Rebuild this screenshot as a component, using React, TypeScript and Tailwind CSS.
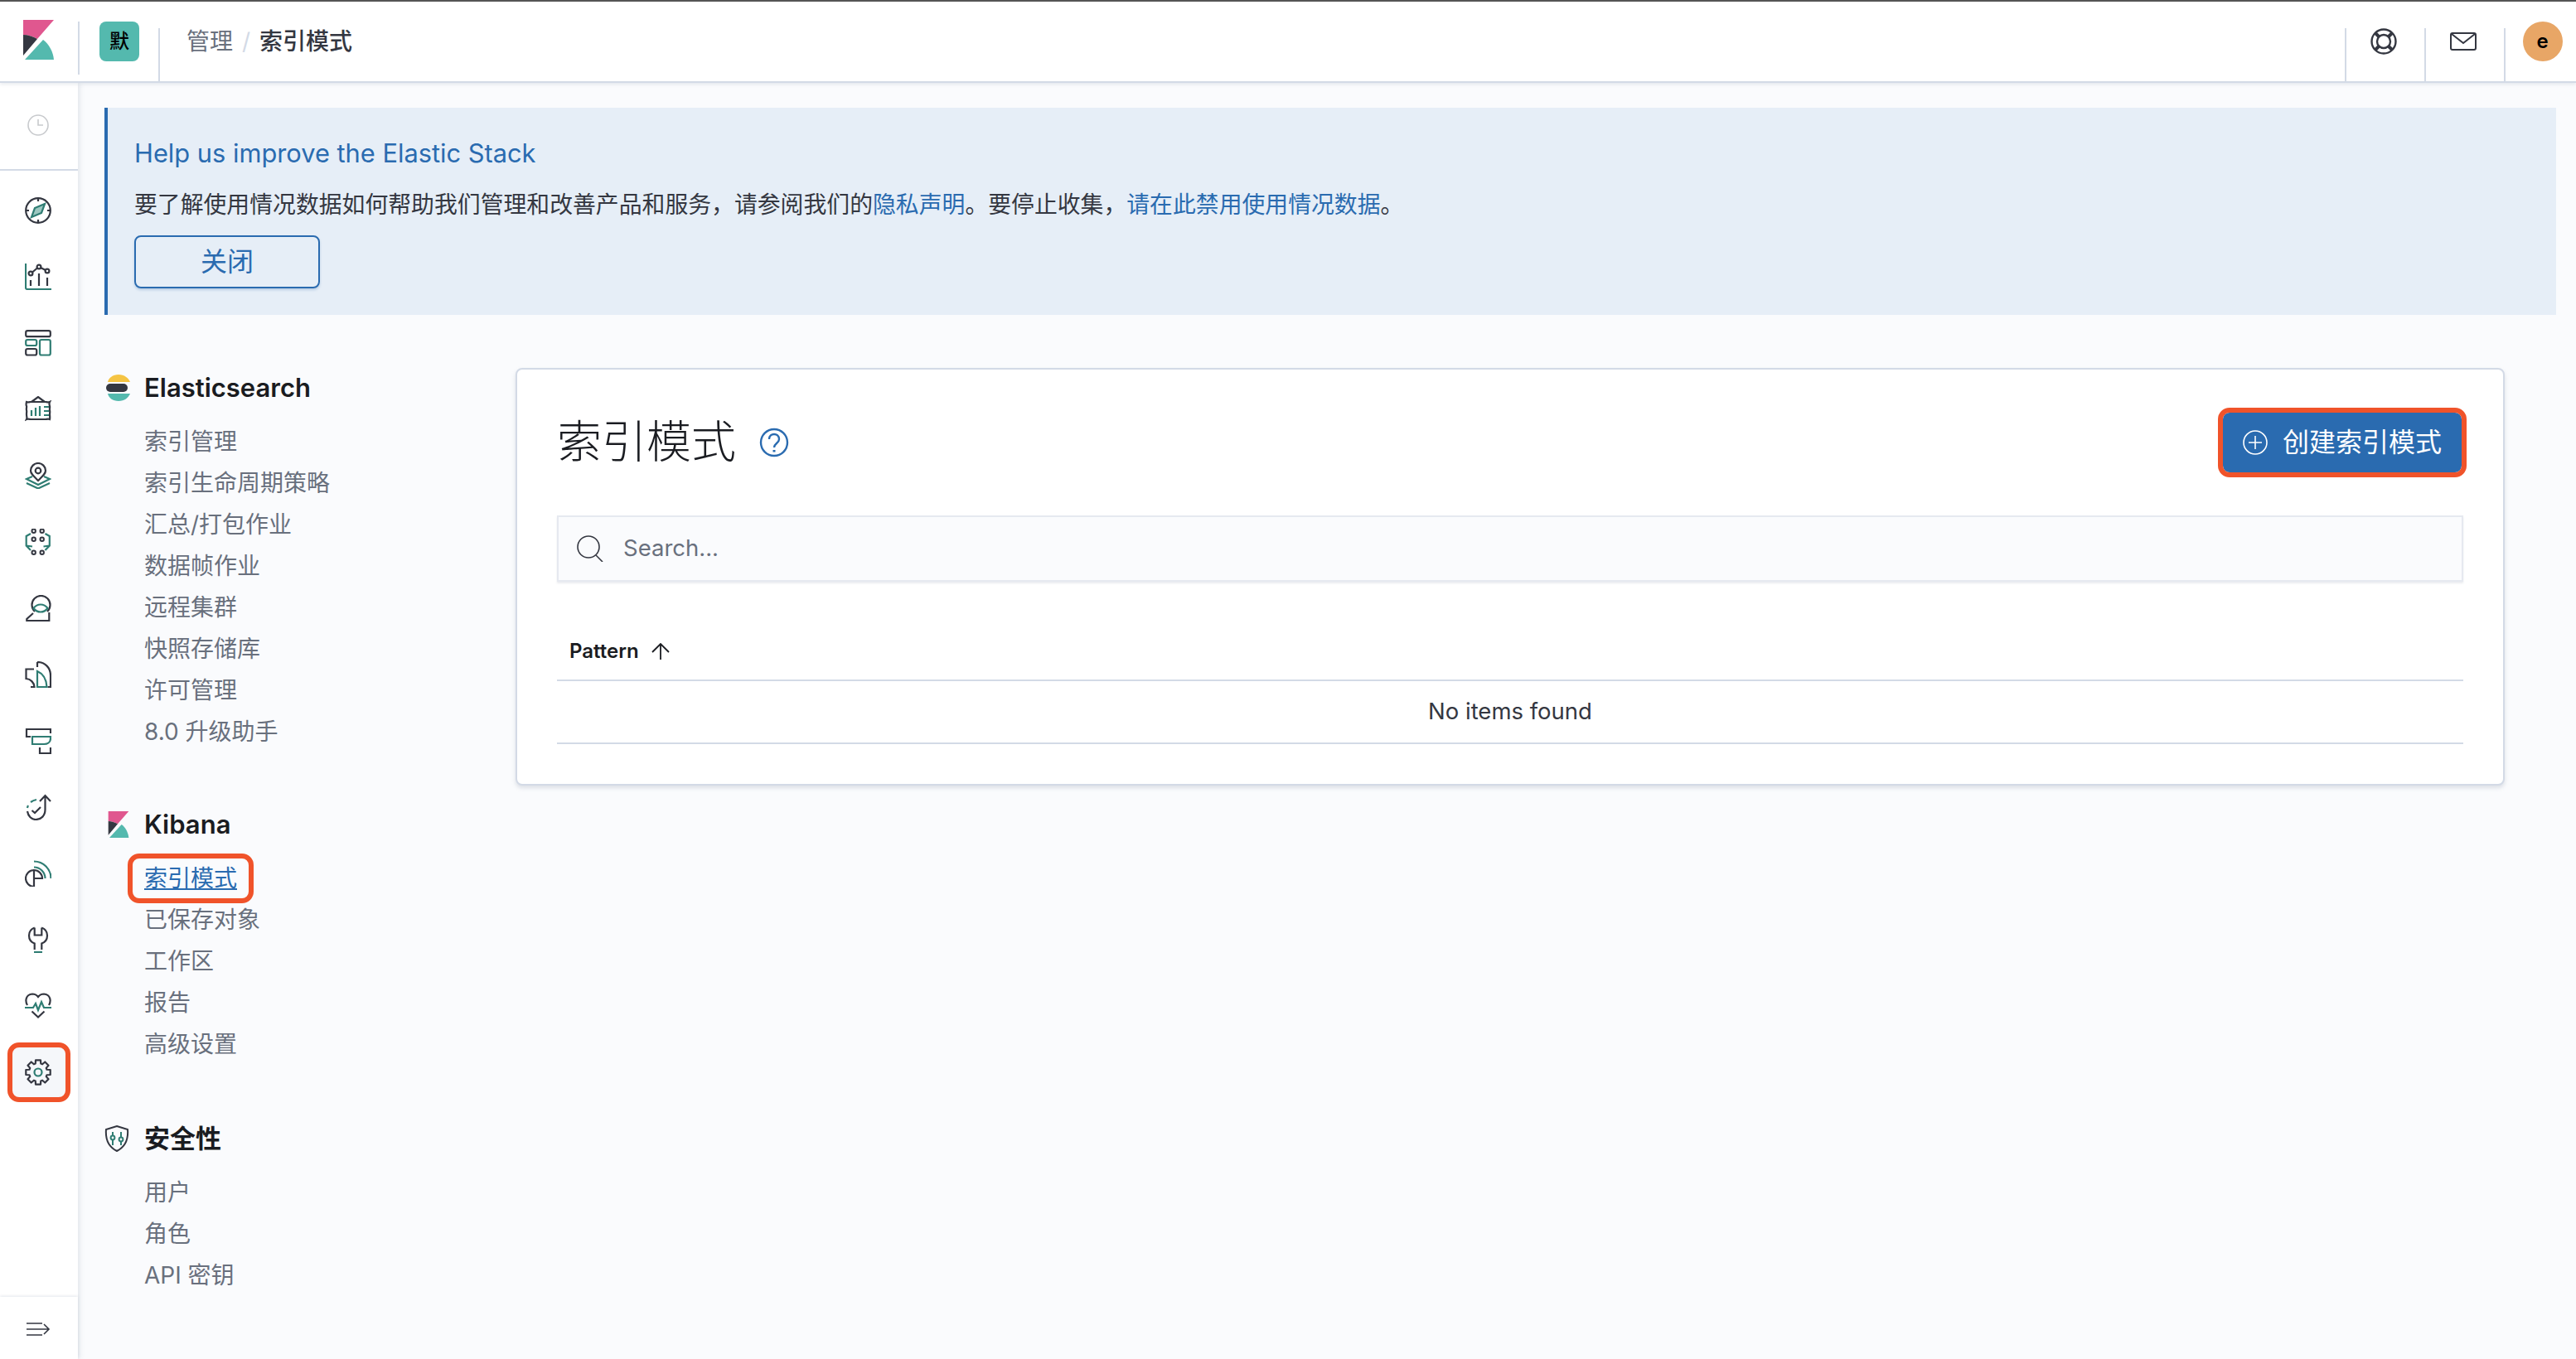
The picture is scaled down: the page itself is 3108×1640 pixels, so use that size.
import { ReactNode } from "react";

const DARK = "#343741";
const TEAL = "#2f7d73";

function Nav({ children }: { children: ReactNode }) {
  return (
    <svg viewBox="0 0 32 32" className="h-8 w-8" fill="none" stroke={DARK} strokeWidth={2.2}>
      {children}
    </svg>
  );
}

const gearPath = (() => {
  const pts: string[] = [];
  for (let i = 0; i < 8; i++) {
    const a = (i * Math.PI) / 4 - Math.PI / 2;
    const at = (r: number, d: number) =>
      `${(16 + r * Math.cos(a + d)).toFixed(2)} ${(16 + r * Math.sin(a + d)).toFixed(2)}`;
    pts.push(at(11, -0.3), at(15, -0.2), at(15, 0.2), at(11, 0.3));
  }
  return "M" + pts.join("L") + "Z";
})();

const navIcons: ReactNode[] = [
  <Nav>
    <circle cx="16" cy="16" r="14.8" />
    <path d="M16 1v4M16 27v4M1 16h4M27 16h4" />
    <path d="M24 8l-4 11-12 5 4-11z" stroke={TEAL} fill="#9cc7c0" />
  </Nav>,
  <Nav>
    <path d="M1 0v29a2 2 0 0 0 2 2h29" stroke={TEAL} />
    <path d="M9 10.5l6-5M19 5l6 3M7 20v7M17 12v15M27 17v10" />
    <circle cx="7" cy="12" r="2.4" />
    <circle cx="17" cy="4" r="2.4" />
    <circle cx="27" cy="9" r="2.4" />
  </Nav>,
  <Nav>
    <rect x="1.2" y="1.2" width="29.6" height="7" rx="2" />
    <rect x="1.2" y="12" width="13" height="7" rx="2" stroke={TEAL} />
    <rect x="1.2" y="23" width="13" height="7.5" rx="2" />
    <rect x="18" y="12" width="12.8" height="18.5" rx="2" stroke={TEAL} />
  </Nav>,
  <Nav>
    <path d="M8 7l8-6 8 6" />
    <path d="M2 7c2 1 4 0 5 0h18c1 0 3 1 5 0-1 2-.5 3 0 5s-.5 3 0 5 0 4 0 5 .5 4 0 6c-2-1-4 0-5 0H7c-1 0-3-1-5 0 1-2 0-3 0-6s.5-3 0-5 .5-4 0-5-.5-3 0-5z" />
    <path d="M8 17v7M13 14v10M18 12v12M23 13h6M23 18h6M23 23h6" stroke={TEAL} />
  </Nav>,
  <Nav>
    <path d="M16 22C10 16 7 13.5 7 10a9 9 0 0 1 18 0c0 3.5-3 6-9 12z" />
    <circle cx="16" cy="10" r="3.3" />
    <path d="M9 17l-7 3 14 7 14-7-7-3" stroke={TEAL} />
    <path d="M2 25l14 6.5 14-6.5" stroke={TEAL} />
  </Nav>,
  <Nav>
    <g strokeWidth={2}>
      <circle cx="10.7" cy="2.7" r="2.2" />
      <circle cx="20.7" cy="2.7" r="2.2" />
      <circle cx="10.7" cy="12.7" r="2.2" />
      <circle cx="20.7" cy="12.7" r="2.2" />
      <circle cx="10.7" cy="28.7" r="2.2" />
      <circle cx="20.7" cy="28.7" r="2.2" />
    </g>
    <path d="M7 6L1.7 9v11.5L7 26M2 20.5l7 1M24.5 6l5.3 3v11.5L24.5 26M29.5 20.5l-7 1" stroke={TEAL} />
  </Nav>,
  <Nav>
    <path d="M12 20A11 11 0 1 1 27 20" />
    <path d="M10.5 16C15 10 23 10 27.5 16 23 22 15 22 10.5 16z" stroke={TEAL} />
    <path d="M10 22l-7.7 7v2h27V21" />
  </Nav>,
  <Nav>
    <path d="M15 1c9.5 0 16 7 16 16v14h-3.5M15 1v6" />
    <path d="M15 12c7 3 11 10 11.5 19H15z" stroke={TEAL} />
    <path d="M11 9.5H1.5V21c5.5.5 9.5 4.5 10 10H7" />
  </Nav>,
  <Nav>
    <path d="M31 7V2H2v9h5" />
    <path d="M9 11h22v2c0 5-4 7-8 7H9z" stroke={TEAL} />
    <path d="M18 24v7h13v-7" />
  </Nav>,
  <Nav>
    <path d="M3 17c.2-1 .5-2 1-3M7 10c2-1.5 4-2.5 7-3" stroke={TEAL} />
    <path d="M3 21c1 6 5 10 10 10 7 0 11.5-5 11.5-12V2M18 9l6.5-7L31 9" />
    <path d="M8.5 20l3.5 3 7-7" />
  </Nav>,
  <Nav>
    <path d="M11 12a10 10 0 1 0 0 20V12a10 10 0 0 1 10 10H11" />
    <path d="M11 1.5A20.5 20.5 0 0 1 31.5 22M11 8.5A13.5 13.5 0 0 1 24.5 22" stroke={TEAL} />
  </Nav>,
  <Nav>
    <path d="M11.7 1.5C7.5 3 5 7 5 11c0 4 2.5 8 6.7 9.5V28M20.3 1.5C24.5 3 27 7 27 11c0 4-2.5 8-6.7 9.5V28M11.7 1.5v9h8.6v-9" />
    <path d="M11 31h10" stroke={TEAL} />
  </Nav>,
  <Nav>
    <path d="M3 15C0 10 1 2 9 1.5c3 0 5.500 1.500 7 3.500 1.500-2 4-3.500 7-3.500 8 .5 9 8.500 6 13.500" />
    <path d="M0 18h10l3-5 3 8 4-10 3 7h9" stroke={TEAL} />
    <path d="M8.500 22.500l7.500 7 7.500-7" />
  </Nav>,
  <Nav>
    <path d={gearPath} strokeLinejoin="round" />
    <circle cx="16" cy="16" r="4.5" stroke={TEAL} />
  </Nav>,
];

function KibanaLogo({ className }: { className: string }) {
  return (
    <svg viewBox="0 0 37 48" className={className}>
      <path d="M0 0h37L17 23C12 20 6 18 0 18z" fill="#e0578f" />
      <path d="M0 18c6 0 12 2 17 5L0 43z" fill="#343741" />
      <path d="M2 48l22-24c7 5 12 14 13 24z" fill="#54b9ae" />
    </svg>
  );
}

function ElasticLogo() {
  return (
    <svg viewBox="0 0 30 32" className="ml-[2px] h-8 w-[30px]">
      <path d="M2 9C3 4 8 0 15 0s12 4 14 9z" fill="#f5c443" />
      <rect x="0" y="11" width="26" height="10" rx="5" fill="#343741" />
      <path d="M2 23h27c-2 5-7 9-14 9S3 28 2 23z" fill="#54b9ae" />
    </svg>
  );
}

function ShieldLogo() {
  return (
    <svg viewBox="0 0 30 32" className="h-8 w-[30px]" fill="none" stroke={DARK} strokeWidth={2}>
      <path d="M15 1l13 4c1 12-3 21-13 26C5 26 1 17 2 5z" />
      <g stroke={TEAL}>
        <path d="M10 8v4M10 18v6M20 8v6M20 20v4" />
        <circle cx="10" cy="15" r="2.4" />
        <circle cx="20" cy="17" r="2.4" />
      </g>
    </svg>
  );
}

function Section({ logo, title, items, className }: { logo: ReactNode; title: string; items: ReactNode[]; className?: string }) {
  return (
    <div className={className}>
      <div className="mb-5 flex h-10 items-center">
        <div className="flex w-[48px] shrink-0">{logo}</div>
        <h3 className="text-[31px] font-semibold leading-10 text-[#1a1c21]">{title}</h3>
      </div>
      <ul className="pl-[48px] text-[28px] leading-[50px] text-[#69707d]">
        {items.map((item, i) => (
          <li key={i}>{item}</li>
        ))}
      </ul>
    </div>
  );
}

export default function App() {
  return (
    <div className="flex h-[1640px] w-[3108px] flex-col overflow-hidden bg-[#fafbfd] font-['Inter','Noto_Sans_CJK_SC',sans-serif] text-[#343741]">
      <header className="z-10 flex h-[100px] shrink-0 items-stretch border-t-2 border-b-2 border-t-[#555555] border-b-[#d3dae6] bg-white shadow-[0_2px_4px_rgba(152,162,179,0.2)]">
        <div className="flex w-[94px] items-start pl-[28px] pt-[22px]">
          <KibanaLogo className="h-12 w-[37px]" />
        </div>
        <div className="mt-8 flex w-[97px] items-start border-l-2 border-[#d3dae6] pl-6 -translate-y-2">
          <div className="flex h-12 w-12 items-center justify-center rounded-lg bg-[#54b9ae] text-[24px] font-medium text-black">默</div>
        </div>
        <nav className="mt-8 flex flex-1 items-start border-l-2 border-[#d3dae6] pl-8 text-[28px] leading-[32px]">
          <span className="text-[#69707d]">管理</span>
          <span className="mx-[11px] text-[#d3dae6]">/</span>
          <span className="font-medium">索引模式</span>
        </nav>
        <div className="mt-8 flex w-[96px] justify-center border-l-2 border-[#d3dae6] pr-1">
          <svg viewBox="0 0 32 32" className="h-8 w-8" fill="none" stroke={DARK} strokeWidth={2.4}>
            <circle cx="16" cy="16" r="14.5" />
            <circle cx="16" cy="16" r="8" />
            <path d="M6 6l4.500 4.500M26 6l-4.500 4.500M6 26l4.500-4.500M26 26l-4.500-4.500" strokeWidth={4} />
          </svg>
        </div>
        <div className="mt-8 flex w-[96px] justify-center border-l-2 border-[#d3dae6] pr-1">
          <svg viewBox="0 0 32 24" className="h-8 w-8" fill="none" stroke={DARK} strokeWidth={2}>
            <rect x="1" y="2" width="30" height="20" rx="2" />
            <path d="M2 3l14 11L30 3" />
          </svg>
        </div>
        <div className="mt-8 flex w-[87px] items-start justify-center border-l-2 border-[#d3dae6] pl-1">
          <div className="-mt-2 flex h-12 w-12 items-center justify-center rounded-full bg-[#e8a666] text-[24px] font-semibold text-black">e</div>
        </div>
      </header>

      <div className="flex min-h-0 flex-1">
        <aside className="z-[5] flex w-[94px] shrink-0 flex-col bg-white shadow-[2px_0_6px_rgba(152,162,179,0.25)]">
          <div className="flex h-[106px] shrink-0 items-center justify-center border-b-2 border-[#d3dae6] pr-[2px] pb-[3px]">
            <svg viewBox="0 0 26 26" className="h-[26px] w-[26px]" fill="none" stroke="#c8cacd" strokeWidth={1.6}>
              <circle cx="13" cy="13" r="12" />
              <path d="M13 6v7h6" />
            </svg>
          </div>
          <div className="flex-1 pt-2">
            {navIcons.map((icon, i) => (
              <div key={i} className="flex h-20 items-center justify-center pr-[2px]">
                {i === navIcons.length - 1 ? (
                  <div className="ml-[2px] flex h-[60px] w-[64px] items-center justify-center rounded-lg bg-[#f5f7fa] pr-[2px] outline-[6px] outline-[#f0532a]">{icon}</div>
                ) : (
                  icon
                )}
              </div>
            ))}
          </div>
          <div className="flex h-[75px] items-center justify-center pt-[2px] pr-[2px] shadow-[0_-1px_3px_rgba(152,162,179,0.25)]">
            <svg viewBox="0 0 30 20" className="h-5 w-[30px]" fill="none" stroke={DARK} strokeWidth={1.6}>
              <path d="M1 3h19M1 10h27M1 17h19M22 4l6 6-6 6" />
            </svg>
          </div>
        </aside>

        <main className="min-w-0 flex-1 pl-8 pr-6 pt-[30px]">
          <div className="flex h-[250px] flex-col items-start border-l-4 border-[#2a6bb0] bg-[#e6eef7] pl-[32px] pt-[33px]">
            <h2 className="text-[30.8px] leading-[44px] text-[#2a6bb0]">Help us improve the Elastic Stack</h2>
            <p className="mt-[15px] text-[27.85px] leading-[50px]">
              要了解使用情况数据如何帮助我们管理和改善产品和服务，请参阅我们的<span className="text-[#2a6bb0]">隐私声明</span>。要停止收集，<span className="text-[#2a6bb0]">请在此禁用使用情况数据</span>。
            </p>
            <button className="mt-[12px] flex h-16 w-[224px] items-center justify-center rounded-lg border-2 border-[#2a6bb0] text-[32px] text-[#2a6bb0] shadow-[0_2px_3px_rgba(42,107,176,0.25)]">关闭</button>
          </div>

          <div className="mt-16 flex items-start">
            <div className="w-[496px] shrink-0 pt-1">
              <Section
                logo={<ElasticLogo />}
                title="Elasticsearch"
                items={["索引管理", "索引生命周期策略", "汇总/打包作业", "数据帧作业", "远程集群", "快照存储库", "许可管理", "8.0 升级助手"]}
              />
              <Section
                className="mt-[67px]"
                logo={<KibanaLogo className="ml-1 h-8 w-[26px]" />}
                title="Kibana"
                items={[
                  <span className="-ml-[14px] inline-block h-12 rounded-lg px-[14px] leading-[48px] text-[#2a6bb0] underline outline-[6px] outline-[#f0532a]">索引模式</span>,
                  "已保存对象",
                  "工作区",
                  "报告",
                  "高级设置",
                ]}
              />
              <Section className="mt-[69px]" logo={<ShieldLogo />} title="安全性" items={["用户", "角色", "API 密钥"]} />
            </div>

            <section className="h-[504px] w-[2400px] shrink-0 rounded-lg border-2 border-[#d3dae6] bg-white px-[48px] pt-[52px] shadow-[0_3px_5px_rgba(152,162,179,0.3)]">
              <div className="flex h-[72px] items-center justify-between">
                <div className="flex items-center gap-[28px]">
                  <h1 className="text-[54px] font-light leading-[72px] text-[#1a1c21]">索引模式</h1>
                  <svg viewBox="0 0 36 36" className="h-9 w-9" fill="none" stroke="#2a6bb0" strokeWidth={2.4}>
                    <circle cx="18" cy="18" r="16" />
                    <path d="M12 14c0-4 3-6 6-6s6 2 6 6c0 5-6 5-6 10" />
                    <path d="M18 27v2.500" strokeWidth={3} />
                  </svg>
                </div>
                <button className="mr-[2px] flex h-[72px] w-[288px] items-center gap-[18px] rounded-lg bg-[#2a6bb0] pl-[24px] text-[32px] text-white outline-[6px] outline-[#f0532a]">
                  <svg viewBox="0 0 30 30" className="h-[30px] w-[30px]" fill="none" stroke="white" strokeWidth={1.6}>
                    <circle cx="15" cy="15" r="14" />
                    <path d="M15 7v16M7 15h16" />
                  </svg>
                  创建索引模式
                </button>
              </div>

              <div className="mt-[52px] flex h-20 items-center border-2 border-[#e6e9f0] bg-[#fafbfd] pl-[22px] text-[27.5px] text-[#69707d] shadow-[0_2px_2px_rgba(152,162,179,0.2)]">
                <svg viewBox="0 0 32 32" className="h-8 w-8" fill="none" stroke={DARK} strokeWidth={1.6}>
                  <circle cx="14" cy="14" r="13" />
                  <path d="M23 24l8 8" />
                </svg>
                <span className="ml-[24px]">Search...</span>
              </div>

              <div className="flex h-[120px] items-end border-b-2 border-[#d3dae6] pb-[18px] pl-[15px]">
                <span className="text-[24px] font-semibold leading-8 text-[#1a1c21]">Pattern</span>
                <svg viewBox="0 0 22 20" className="mb-[6px] ml-[15px] h-5 w-[22px]" fill="none" stroke="#1a1c21" strokeWidth={1.8}>
                  <path d="M11 1v19M1 11L11 1l10 10" />
                </svg>
              </div>
              <div className="flex h-[76px] items-center justify-center border-b-2 border-[#d3dae6] text-[27.5px]">No items found</div>
            </section>
          </div>
        </main>
      </div>
    </div>
  );
}
